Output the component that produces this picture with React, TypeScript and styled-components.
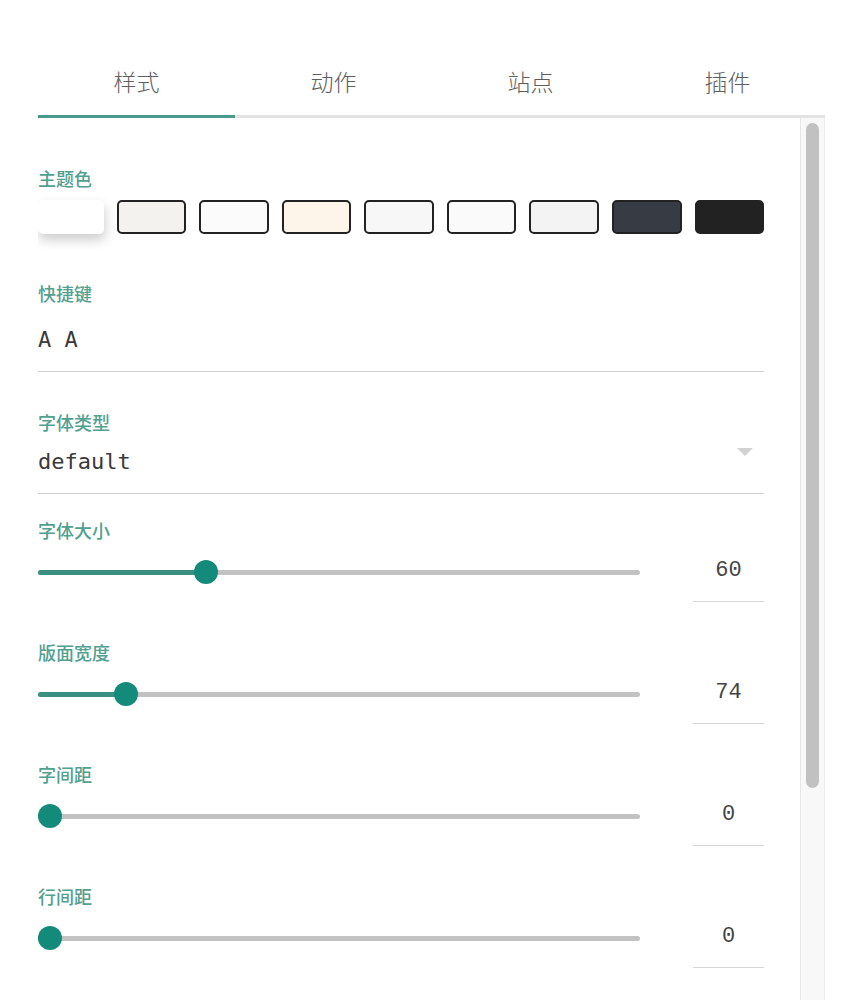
import React from "react";
import styled, { createGlobalStyle } from "styled-components";

const GlobalStyle = createGlobalStyle`
  html, body {
    margin: 0;
    padding: 0;
    background: #ffffff;
    overflow: hidden;
  }
  body {
    font-family: "Noto Sans CJK SC", "Noto Sans", sans-serif;
  }
`;

const TEAL = "#148a7b";
const LABEL = "#52a08f";

const Page = styled.div`
  padding: 50px 0 0 38px;
  width: 825px;
  height: 1000px;
  box-sizing: border-box;
  display: flex;
  flex-direction: column;
`;

const TabBar = styled.div`
  display: flex;
  border-bottom: 3px solid #e3e3e3;
`;

const Tab = styled.div<{ $active?: boolean }>`
  flex: 0 0 197px;
  display: flex;
  align-items: center;
  justify-content: center;
  font-size: 23px;
  color: #5e5e5e;
  font-weight: 300;
  box-sizing: border-box;
  margin-bottom: -3px;
  border-bottom: 3px solid ${(p) => (p.$active ? "#4a9a8b" : "transparent")};
  height: 68px;
  padding-bottom: 3px;
`;

const Panel = styled.div`
  flex: 1;
  display: flex;
  overflow: hidden;
`;

const Content = styled.div`
  flex: 1;
  padding: 48px 36px 0 0;
  display: flex;
  flex-direction: column;
`;

const ScrollTrack = styled.div`
  flex: 0 0 25px;
  box-sizing: border-box;
  background: #f8f8f8;
  border-left: 1px solid #e6e6e6;
  border-right: 1px solid #ececec;
  padding: 5px 5px 0 5px;
`;

const ScrollThumb = styled.div`
  height: 665px;
  background: #c1c1c1;
  border-radius: 7px;
`;

const Section = styled.section<{ $top?: number }>`
  margin-top: ${(p) => p.$top ?? 0}px;
  display: flex;
  flex-direction: column;
`;

const Label = styled.div`
  font-size: 18px;
  line-height: 24px;
  font-weight: 500;
  color: ${LABEL};
`;

const Swatches = styled.div`
  display: flex;
  gap: 13px;
  margin-top: 10px;
`;

const Swatch = styled.div<{ $color: string; $selected?: boolean }>`
  flex: 1;
  height: 34px;
  box-sizing: border-box;
  border-radius: 5px;
  background: ${(p) => p.$color};
  border: ${(p) => (p.$selected ? "none" : "2px solid #222")};
  box-shadow: ${(p) =>
    p.$selected ? "1px 6px 12px rgba(0, 0, 0, 0.2)" : "none"};
`;

const TextField = styled.div<{ $pt: number }>`
  display: flex;
  align-items: center;
  padding: ${(p) => p.$pt}px 0 16px;
  border-bottom: 1px solid #cfcfcf;
  font-family: "DejaVu Sans Mono", monospace;
  font-size: 22px;
  line-height: 30px;
  color: #3a3a3a;
  white-space: pre;
`;

const FieldText = styled.span`
  flex: 1;
`;

const Arrow = styled.svg`
  width: 16px;
  height: 8px;
  margin-right: 11px;
  margin-top: -20px;
`;

const SliderRow = styled.div`
  display: flex;
  align-items: center;
  gap: 53px;
  height: 60px;
`;

const SliderBox = styled.div`
  flex: 1;
  position: relative;
  height: 24px;
  display: flex;
  align-items: center;
`;

const Track = styled.div`
  width: 100%;
  height: 5px;
  border-radius: 3px;
  background: #c2c2c2;
  position: relative;
`;

const Fill = styled.div`
  position: absolute;
  left: 0;
  top: 0;
  bottom: 0;
  background: #3b8f80;
  border-radius: 3px 0 0 3px;
`;

const Thumb = styled.div`
  position: absolute;
  top: 0;
  width: 24px;
  height: 24px;
  border-radius: 50%;
  background: ${TEAL};
`;

const ValueBox = styled.div`
  flex: 0 0 71px;
  box-sizing: border-box;
  height: 60px;
  padding-top: 14px;
  border-bottom: 1px solid #d6d6d6;
  text-align: center;
  font-family: "Liberation Mono", monospace;
  font-size: 22px;
  line-height: 30px;
  color: #444;
`;

const tabs = ["样式", "动作", "站点", "插件"];
const colors = [
  "#ffffff",
  "#f3f2ef",
  "#fbfbfb",
  "#fdf5ea",
  "#f7f7f7",
  "#fafafa",
  "#f3f3f3",
  "#373b43",
  "#222222",
];

const sliders = [
  { label: "字体大小", value: 60, min: 20, max: 168, top: 24 },
  { label: "版面宽度", value: 74, min: 64, max: 140, top: 38 },
  { label: "字间距", value: 0, min: 0, max: 10, top: 38 },
  { label: "行间距", value: 0, min: 0, max: 10, top: 38 },
];

function Slider({ pct }: { pct: number }) {
  return (
    <SliderBox>
      <Track>
        <Fill style={{ width: `calc(12px + ${pct} * (100% - 24px))` }} />
      </Track>
      <Thumb style={{ left: `calc(${pct} * (100% - 24px))` }} />
    </SliderBox>
  );
}

export default function App() {
  return (
    <>
      <GlobalStyle />
      <Page>
        <TabBar>
          {tabs.map((t, i) => (
            <Tab key={t} $active={i === 0}>
              {t}
            </Tab>
          ))}
        </TabBar>
        <Panel>
          <Content>
            <Section>
              <Label>主题色</Label>
              <Swatches>
                {colors.map((c, i) => (
                  <Swatch key={i} $color={c} $selected={i === 0} />
                ))}
              </Swatches>
            </Section>
            <Section $top={47}>
              <Label>快捷键</Label>
              <TextField $pt={20}>
                <FieldText>A A</FieldText>
              </TextField>
            </Section>
            <Section $top={38}>
              <Label>字体类型</Label>
              <TextField $pt={13}>
                <FieldText>default</FieldText>
                <Arrow viewBox="0 0 16 8">
                  <path d="M0 0 L16 0 L8 8 Z" fill="#d2d2d2" />
                </Arrow>
              </TextField>
            </Section>
            {sliders.map((s) => (
              <Section key={s.label} $top={s.top}>
                <Label>{s.label}</Label>
                <SliderRow>
                  <Slider pct={(s.value - s.min) / (s.max - s.min)} />
                  <ValueBox>{s.value}</ValueBox>
                </SliderRow>
              </Section>
            ))}
          </Content>
          <ScrollTrack>
            <ScrollThumb />
          </ScrollTrack>
        </Panel>
      </Page>
    </>
  );
}
